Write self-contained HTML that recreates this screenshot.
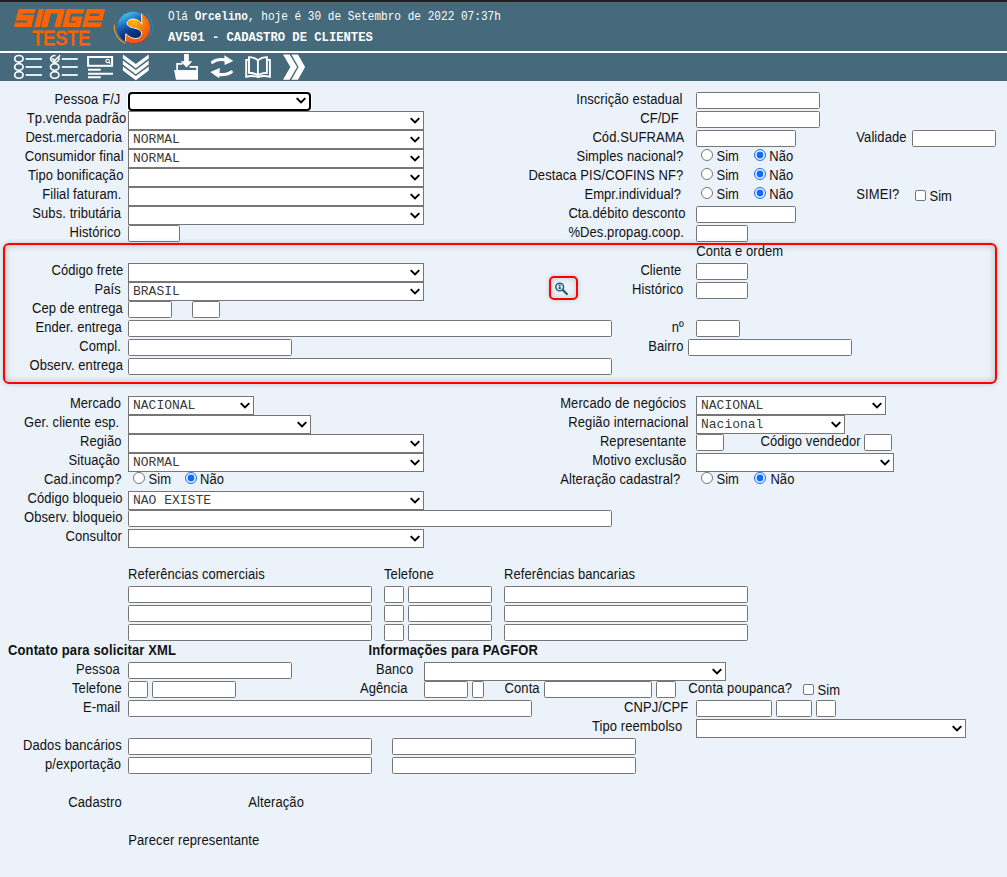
<!DOCTYPE html>
<html><head><meta charset="utf-8"><style>
html,body{margin:0;padding:0;}
body{width:1007px;height:877px;overflow:hidden;position:relative;background:#ebf2f9;font-family:"Liberation Sans",sans-serif;font-size:13px;color:#111;}
#topstrip{position:absolute;left:0;top:0;width:1007px;height:2px;background:#1f2023}
#hdr{position:absolute;left:0;top:4px;width:1007px;height:47px;background:#446a7b}
#hline{position:absolute;left:0;top:51px;width:1007px;height:2px;background:#fff}
#tb{position:absolute;left:0;top:53px;width:1007px;height:28px;background:#446a7b}
.ht{position:absolute;color:#fff;font-family:"Liberation Mono",monospace;white-space:nowrap;line-height:14px}
.l{position:absolute;white-space:nowrap;line-height:15px;letter-spacing:0.08px;transform:scaleY(1.06);transform-origin:0 12px}
.s{position:absolute;box-sizing:border-box;border:1px solid #767676;background:#fff;}
.sf{border:2px solid #000;border-radius:4px;box-shadow:0 0 0 1px #fff}
.st{position:absolute;left:4px;top:1px;font-family:"Liberation Mono",monospace;font-size:13px;line-height:15px;color:#3a3a3a;white-space:nowrap}
.chev{position:absolute;right:3.5px;top:5px}
.i{position:absolute;box-sizing:border-box;border:1px solid #767676;border-radius:1.6px;background:#fff;}
.r{position:absolute;width:12px;height:12px;box-sizing:border-box;border:1px solid #767676;border-radius:50%;background:#fff}
.rc{position:absolute;width:12px;height:12px;box-sizing:border-box;border:1.2px solid #1a6ff0;border-radius:50%;background:#fff;box-shadow:inset 0 0 0 1.6px #fff, inset 0 0 0 6px #0f6cff}
.c{position:absolute;width:11px;height:11px;box-sizing:border-box;border:1px solid #767676;border-radius:2px;background:#fff}
.box{position:absolute;border:2px solid #f00;border-radius:6px;box-shadow:0 0 5px rgba(0,0,0,.2), inset 0 0 7px rgba(0,0,0,.24)}
.mag{position:absolute;border:2px solid #f00;border-radius:5px;box-shadow:0 0 5px rgba(0,0,0,.18), inset 0 0 6px rgba(0,0,0,.18)}
</style></head><body>

<div id="topstrip"></div><div style="position:absolute;left:0;top:2px;width:1007px;height:1px;background:#60676b"></div><div style="position:absolute;left:0;top:3px;width:1007px;height:1px;background:#3f6b7e"></div>
<div id="hdr"></div>
<div id="hline"></div>
<div id="tb"></div>
<svg id="hsvg" width="1007" height="81" viewBox="0 0 1007 81" style="position:absolute;left:0;top:0"><g fill="#ff6300"><polygon points="18.50,9.00 35.70,9.00 34.58,13.50 22.88,13.50 22.50,15.00 34.20,15.00 31.20,27.00 14.00,27.00 15.12,22.50 27.12,22.50 27.62,20.50 15.62,20.50"/><polygon points="38.80,9.00 44.30,9.00 39.80,27.00 34.30,27.00"/><polygon points="45.50,9.00 65.00,9.00 60.50,27.00 54.40,27.00 57.80,13.40 50.80,13.40 47.40,27.00 41.00,27.00"/><polygon points="66.80,9.00 84.50,9.00 83.40,13.40 70.90,13.40 68.65,22.40 75.65,22.40 76.03,20.90 71.03,20.90 72.15,16.40 82.65,16.40 80.00,27.00 62.30,27.00"/><path fill-rule="evenodd" d="M86.80,9.00 L105.20,9.00 L102.35,20.40 L88.15,20.40 L87.65,22.40 L101.85,22.40 L100.70,27.00 L82.30,27.00 Z M89.90,13.40 L99.40,13.40 L98.78,15.90 L89.28,15.90 Z"/></g><text x="32.3" y="45.2" font-family="Liberation Sans" font-size="20.6" fill="#ff6300" stroke="#ff6300" stroke-width="0.9" textLength="57.8" lengthAdjust="spacingAndGlyphs">TESTE</text>
<defs>
<linearGradient id="gb" x1="0.25" y1="0.05" x2="0.65" y2="0.85"><stop offset="0" stop-color="#48c0f0"/><stop offset="0.35" stop-color="#1a6cc0"/><stop offset="0.62" stop-color="#0b3a88"/><stop offset="1" stop-color="#08235e"/></linearGradient>
<radialGradient id="go" cx="133.5" cy="22" r="18" gradientUnits="userSpaceOnUse"><stop offset="0" stop-color="#ffc400"/><stop offset="0.35" stop-color="#f7900a"/><stop offset="1" stop-color="#ee5a12"/></radialGradient>
<clipPath id="cc"><ellipse cx="133.7" cy="27.6" rx="16.5" ry="15.8"/></clipPath>
</defs>
<ellipse cx="133.7" cy="27.6" rx="16.5" ry="15.8" fill="url(#gb)"/>
<g clip-path="url(#cc)">
<path d="M141.3 8 L141.8 24.2 C139 18.2 129.5 17.2 127.2 22.2 C126.4 26.6 131.5 27.6 136 28.5 C141.5 29.8 143.2 33.5 140.2 36.8 C136.5 40.2 130 38.4 125.8 33.6 L125.3 48 L156 48 L156 8 Z" fill="url(#go)" stroke="#fff" stroke-width="0.9"/>
</g>
<path d="M146.5 13.8 A18.5 18.5 0 0 1 150 36.5" fill="none" stroke="#1f86c0" stroke-width="1.1"/>
<path d="M114.3 24.5 A19.5 19.5 0 0 0 125.5 43.6" fill="none" stroke="#f39a1a" stroke-width="1.1"/>

<g fill="none" stroke="#ffffff" stroke-width="1.65">
<ellipse cx="18.9" cy="58.8" rx="4.2" ry="3.3"/><ellipse cx="18.9" cy="66.9" rx="4.2" ry="3.3"/><ellipse cx="18.9" cy="74.9" rx="4.2" ry="3.3"/>
<ellipse cx="54.7" cy="66.9" rx="4.2" ry="3.3"/><ellipse cx="54.7" cy="74.9" rx="4.2" ry="3.3"/>
<path d="M58.5 57.3 A4.2 3.3 0 1 1 55.5 55.6"/>
<path d="M52.2 58.2 L54.4 60.6 L60.2 55.2" stroke-width="1.5"/>
</g>
<g stroke="#e2e9ec" stroke-width="2">
<path d="M25.6 59 H42 M25.6 67 H42 M25.6 75 H42 M61.8 59 H77.8 M61.8 67 H77.8 M61.8 75 H77.8"/>
</g>
<g fill="none" stroke="#ffffff" stroke-width="2">
<rect x="88.1" y="57" width="24" height="8.8"/>
<path d="M88 69.7 H100.7 M88 73.7 H113 M88 77.2 H100.7"/>
</g>
<circle cx="107.6" cy="60.9" r="1.7" fill="none" stroke="#ffffff" stroke-width="1.1"/><path d="M108.8 62.1 L110.3 63.6" stroke="#ffffff" stroke-width="1.2"/>
<g fill="#ffffff">
<polygon points="122.9,54.4 135.8,64 148.7,54.4 148.7,58.6 135.8,68.2 122.9,58.6"/>
<polygon points="122.9,60.4 135.8,70 148.7,60.4 148.7,64.6 135.8,74.2 122.9,64.6"/>
<polygon points="122.9,66.4 135.8,76 148.7,66.4 148.7,70.6 135.8,80.2 122.9,70.6"/>
</g>
<g fill="#ffffff">
<rect x="184.1" y="54" width="4.7" height="8"/>
<polygon points="180.5,61.2 192.4,61.2 186.5,67.6"/>
<polygon points="174.1,69.9 198,69.9 198,79.8 176,79.8"/>
</g>
<path d="M177.1 79 V63.9 H182.4 M189.6 66.9 H197.1 V70" fill="none" stroke="#ffffff" stroke-width="1.7"/>
<g fill="none" stroke="#ffffff" stroke-width="3.2" stroke-linecap="round">
<path d="M212.5 62.3 C216 59.5 221 59 226.5 60"/>
<path d="M231.3 72 C228 74.6 222 75 217 74.5"/>
</g>
<g fill="#ffffff">
<polygon points="224.3,55.3 233.4,61.1 224.6,64.9"/>
<polygon points="219.8,68 210.3,72 219.2,78.2"/>
</g>
<g fill="none" stroke="#ffffff" stroke-width="1.9" stroke-linejoin="miter">
<path d="M257.9 60.2 Q253.5 56.8 249 57.1 V72.8 Q253.5 72.8 257.9 75.2 Q262.3 72.8 266.9 72.8 V57.1 Q262.3 56.8 257.9 60.2 V75.6"/>
<path d="M249 59.9 H246.2 V76.8 Q252 75 257.9 77 Q263.8 75 269.9 76.8 V59.9 H266.9"/>
</g>
<g fill="#ffffff">
<polygon points="283,54.4 289.6,54.4 297.1,67.1 289.6,79.8 283,79.8 290.4,67.1"/>
<polygon points="291.4,54.4 298,54.4 305.1,67.1 298,79.8 291.4,79.8 298.6,67.1"/>
</g>
</svg>
<div class="ht" style="left:168px;top:10.4px;font-size:11.1px;transform:scaleY(1.13);transform-origin:0 11.5px">Olá <b>Orcelino</b>, hoje é 30 de Setembro de 2022 07:37h</div>
<div class="ht" style="left:168px;top:30.8px;font-size:12.2px;font-weight:bold">AV501 - CADASTRO DE CLIENTES</div>

<div class="l" style="left:54.6px;top:92px;">Pessoa F/J</div>
<div class="l" style="left:26.8px;top:111px;">Tp.venda padrão</div>
<div class="l" style="left:25.4px;top:130px;">Dest.mercadoria</div>
<div class="l" style="left:24.8px;top:149px;">Consumidor final</div>
<div class="l" style="left:28px;top:168px;">Tipo bonificação</div>
<div class="l" style="left:42.2px;top:187px;">Filial faturam.</div>
<div class="l" style="left:32.3px;top:206px;">Subs. tributária</div>
<div class="l" style="left:69.5px;top:225px;">Histórico</div>
<div class="s sf" style="left:128px;top:92px;width:183px;height:19px"><svg class="chev" style="right:3.3px;top:3.4px" width="10" height="7" viewBox="0 0 10 7"><path d="M0.7 1.1 L5 5.4 L9.3 1.1" fill="none" stroke="#000" stroke-width="2"/></svg></div>
<div class="s" style="left:128px;top:111px;width:296px;height:19px"><svg class="chev" width="10" height="7" viewBox="0 0 10 7"><path d="M0.7 1.1 L5 5.4 L9.3 1.1" fill="none" stroke="#000" stroke-width="2"/></svg></div>
<div class="s" style="left:128px;top:130px;width:296px;height:19px"><span class="st">NORMAL</span><svg class="chev" width="10" height="7" viewBox="0 0 10 7"><path d="M0.7 1.1 L5 5.4 L9.3 1.1" fill="none" stroke="#000" stroke-width="2"/></svg></div>
<div class="s" style="left:128px;top:149px;width:296px;height:19px"><span class="st">NORMAL</span><svg class="chev" width="10" height="7" viewBox="0 0 10 7"><path d="M0.7 1.1 L5 5.4 L9.3 1.1" fill="none" stroke="#000" stroke-width="2"/></svg></div>
<div class="s" style="left:128px;top:168px;width:296px;height:19px"><svg class="chev" width="10" height="7" viewBox="0 0 10 7"><path d="M0.7 1.1 L5 5.4 L9.3 1.1" fill="none" stroke="#000" stroke-width="2"/></svg></div>
<div class="s" style="left:128px;top:187px;width:296px;height:19px"><svg class="chev" width="10" height="7" viewBox="0 0 10 7"><path d="M0.7 1.1 L5 5.4 L9.3 1.1" fill="none" stroke="#000" stroke-width="2"/></svg></div>
<div class="s" style="left:128px;top:206px;width:296px;height:19px"><svg class="chev" width="10" height="7" viewBox="0 0 10 7"><path d="M0.7 1.1 L5 5.4 L9.3 1.1" fill="none" stroke="#000" stroke-width="2"/></svg></div>
<div class="i" style="left:128px;top:225px;width:52px;height:17px"></div>
<div class="l" style="left:576.2px;top:92px;">Inscrição estadual</div>
<div class="l" style="left:640.2px;top:111px;">CF/DF</div>
<div class="l" style="left:592.4px;top:130px;">Cód.SUFRAMA</div>
<div class="l" style="left:576.4px;top:149px;">Simples nacional?</div>
<div class="l" style="left:528.4px;top:168px;">Destaca PIS/COFINS NF?</div>
<div class="l" style="left:584.4px;top:187px;">Empr.individual?</div>
<div class="l" style="left:568.4px;top:206px;">Cta.débito desconto</div>
<div class="l" style="left:568.4px;top:225px;">%Des.propag.coop.</div>
<div class="i" style="left:696px;top:92px;width:124px;height:17px"></div>
<div class="i" style="left:696px;top:111px;width:124px;height:17px"></div>
<div class="i" style="left:696px;top:130px;width:100px;height:17px"></div>
<div class="i" style="left:696px;top:206px;width:100px;height:17px"></div>
<div class="i" style="left:696px;top:225px;width:52px;height:17px"></div>
<div class="r" style="left:701px;top:149px"></div>
<div class="l" style="left:716.4px;top:149px;">Sim</div>
<div class="rc" style="left:754.3px;top:149px"></div>
<div class="l" style="left:769.3px;top:149px;">Não</div>
<div class="r" style="left:701px;top:168px"></div>
<div class="l" style="left:716.4px;top:168px;">Sim</div>
<div class="rc" style="left:754.3px;top:168px"></div>
<div class="l" style="left:769.3px;top:168px;">Não</div>
<div class="r" style="left:701px;top:187px"></div>
<div class="l" style="left:716.4px;top:187px;">Sim</div>
<div class="rc" style="left:754.3px;top:187px"></div>
<div class="l" style="left:769.3px;top:187px;">Não</div>
<div class="l" style="left:856.3px;top:130px;">Validade</div>
<div class="i" style="left:912px;top:130px;width:84px;height:17px"></div>
<div class="l" style="left:856.3px;top:187px;">SIMEI?</div>
<div class="c" style="left:914.8px;top:190.2px"></div>
<div class="l" style="left:929.4px;top:189px;">Sim</div>
<div class="box" style="left:2.5px;top:242.5px;width:990px;height:137px"></div>
<div class="l" style="left:696.2px;top:244px;">Conta e ordem</div>
<div class="l" style="left:51.5px;top:263px;">Código frete</div>
<div class="l" style="left:94.4px;top:282px;">País</div>
<div class="l" style="left:32.1px;top:301px;">Cep de entrega</div>
<div class="l" style="left:35.4px;top:320px;">Ender. entrega</div>
<div class="l" style="left:79.3px;top:339px;">Compl.</div>
<div class="l" style="left:29.5px;top:358px;">Observ. entrega</div>
<div class="s" style="left:128px;top:263px;width:296px;height:19px"><svg class="chev" width="10" height="7" viewBox="0 0 10 7"><path d="M0.7 1.1 L5 5.4 L9.3 1.1" fill="none" stroke="#000" stroke-width="2"/></svg></div>
<div class="s" style="left:128px;top:282px;width:296px;height:19px"><span class="st">BRASIL</span><svg class="chev" width="10" height="7" viewBox="0 0 10 7"><path d="M0.7 1.1 L5 5.4 L9.3 1.1" fill="none" stroke="#000" stroke-width="2"/></svg></div>
<div class="i" style="left:128px;top:301px;width:44px;height:17px"></div>
<div class="i" style="left:192px;top:301px;width:28px;height:17px"></div>
<div class="i" style="left:128px;top:320px;width:484px;height:17px"></div>
<div class="i" style="left:128px;top:339px;width:164px;height:17px"></div>
<div class="i" style="left:128px;top:358px;width:484px;height:17px"></div>
<div class="l" style="left:640.4px;top:263px;">Cliente</div>
<div class="i" style="left:696px;top:263px;width:52px;height:17px"></div>
<div class="l" style="left:632px;top:282px;">Histórico</div>
<div class="i" style="left:696px;top:282px;width:52px;height:17px"></div>
<div class="l" style="left:671.7px;top:320px;">nº</div>
<div class="i" style="left:696px;top:320px;width:44px;height:17px"></div>
<div class="l" style="left:648.3px;top:339px;">Bairro</div>
<div class="i" style="left:688px;top:339px;width:164px;height:17px"></div>
<div class="mag" style="left:549.3px;top:276px;width:25px;height:20px"><svg width="29" height="24" viewBox="0 0 29 24" style="position:absolute;left:-2px;top:-2px"><circle cx="10.7" cy="11" r="3.85" fill="none" stroke="#1d6275" stroke-width="1.5"/><path d="M13.7 13.9 L17.9 18" stroke="#1d6275" stroke-width="2.2" stroke-linecap="round"/><circle cx="10.7" cy="9.6" r="1.15" fill="#1d6275"/><path d="M9.3 12.9 Q9.3 10.7 10.7 10.7 Q12.1 10.7 12.1 12.9 Z" fill="#1d6275"/></svg></div>
<div class="l" style="left:69.9px;top:396px;">Mercado</div>
<div class="l" style="left:24px;top:415px;">Ger. cliente esp.</div>
<div class="l" style="left:80px;top:434px;">Região</div>
<div class="l" style="left:68.6px;top:453px;">Situação</div>
<div class="l" style="left:44.1px;top:472px;">Cad.incomp?</div>
<div class="l" style="left:27.5px;top:491px;">Código bloqueio</div>
<div class="l" style="left:24px;top:510px;">Observ. bloqueio</div>
<div class="l" style="left:65.5px;top:529px;">Consultor</div>
<div class="s" style="left:128px;top:396px;width:126px;height:19px"><span class="st">NACIONAL</span><svg class="chev" width="10" height="7" viewBox="0 0 10 7"><path d="M0.7 1.1 L5 5.4 L9.3 1.1" fill="none" stroke="#000" stroke-width="2"/></svg></div>
<div class="s" style="left:128px;top:415px;width:183px;height:19px"><svg class="chev" width="10" height="7" viewBox="0 0 10 7"><path d="M0.7 1.1 L5 5.4 L9.3 1.1" fill="none" stroke="#000" stroke-width="2"/></svg></div>
<div class="s" style="left:128px;top:434px;width:296px;height:19px"><svg class="chev" width="10" height="7" viewBox="0 0 10 7"><path d="M0.7 1.1 L5 5.4 L9.3 1.1" fill="none" stroke="#000" stroke-width="2"/></svg></div>
<div class="s" style="left:128px;top:453px;width:296px;height:19px"><span class="st">NORMAL</span><svg class="chev" width="10" height="7" viewBox="0 0 10 7"><path d="M0.7 1.1 L5 5.4 L9.3 1.1" fill="none" stroke="#000" stroke-width="2"/></svg></div>
<div class="r" style="left:132.6px;top:472px"></div>
<div class="l" style="left:148.5px;top:472px;">Sim</div>
<div class="rc" style="left:184.9px;top:472px"></div>
<div class="l" style="left:200px;top:472px;">Não</div>
<div class="s" style="left:128px;top:491px;width:296px;height:19px"><span class="st">NAO EXISTE</span><svg class="chev" width="10" height="7" viewBox="0 0 10 7"><path d="M0.7 1.1 L5 5.4 L9.3 1.1" fill="none" stroke="#000" stroke-width="2"/></svg></div>
<div class="i" style="left:128px;top:510px;width:484px;height:17px"></div>
<div class="s" style="left:128px;top:529px;width:296px;height:19px"><svg class="chev" width="10" height="7" viewBox="0 0 10 7"><path d="M0.7 1.1 L5 5.4 L9.3 1.1" fill="none" stroke="#000" stroke-width="2"/></svg></div>
<div class="l" style="left:560.2px;top:396px;">Mercado de negócios</div>
<div class="l" style="left:568.3px;top:415px;">Região internacional</div>
<div class="l" style="left:599.9px;top:434px;">Representante</div>
<div class="l" style="left:592.2px;top:453px;">Motivo exclusão</div>
<div class="l" style="left:560.2px;top:472px;">Alteração cadastral?</div>
<div class="s" style="left:696px;top:396px;width:190px;height:19px"><span class="st">NACIONAL</span><svg class="chev" width="10" height="7" viewBox="0 0 10 7"><path d="M0.7 1.1 L5 5.4 L9.3 1.1" fill="none" stroke="#000" stroke-width="2"/></svg></div>
<div class="s" style="left:696px;top:415px;width:149px;height:19px"><span class="st">Nacional</span><svg class="chev" width="10" height="7" viewBox="0 0 10 7"><path d="M0.7 1.1 L5 5.4 L9.3 1.1" fill="none" stroke="#000" stroke-width="2"/></svg></div>
<div class="i" style="left:696px;top:434px;width:28px;height:17px"></div>
<div class="l" style="left:760.5px;top:434px;">Código vendedor</div>
<div class="i" style="left:864px;top:434px;width:28px;height:17px"></div>
<div class="s" style="left:696px;top:453px;width:198px;height:19px"><svg class="chev" width="10" height="7" viewBox="0 0 10 7"><path d="M0.7 1.1 L5 5.4 L9.3 1.1" fill="none" stroke="#000" stroke-width="2"/></svg></div>
<div class="r" style="left:701px;top:472px"></div>
<div class="l" style="left:716.4px;top:472px;">Sim</div>
<div class="rc" style="left:754.3px;top:472px"></div>
<div class="l" style="left:770.4px;top:472px;">Não</div>
<div class="l" style="left:128px;top:567px;">Referências comerciais</div>
<div class="l" style="left:384px;top:567px;">Telefone</div>
<div class="l" style="left:504px;top:567px;">Referências bancarias</div>
<div class="i" style="left:128px;top:586px;width:244px;height:17px"></div>
<div class="i" style="left:384px;top:586px;width:20px;height:17px"></div>
<div class="i" style="left:408px;top:586px;width:84px;height:17px"></div>
<div class="i" style="left:504px;top:586px;width:244px;height:17px"></div>
<div class="i" style="left:128px;top:605px;width:244px;height:17px"></div>
<div class="i" style="left:384px;top:605px;width:20px;height:17px"></div>
<div class="i" style="left:408px;top:605px;width:84px;height:17px"></div>
<div class="i" style="left:504px;top:605px;width:244px;height:17px"></div>
<div class="i" style="left:128px;top:624px;width:244px;height:17px"></div>
<div class="i" style="left:384px;top:624px;width:20px;height:17px"></div>
<div class="i" style="left:408px;top:624px;width:84px;height:17px"></div>
<div class="i" style="left:504px;top:624px;width:244px;height:17px"></div>
<div class="l" style="left:8px;top:643px;font-weight:bold;letter-spacing:0.13px;">Contato para solicitar XML</div>
<div class="l" style="left:368.5px;top:643px;font-weight:bold;letter-spacing:0.13px;">Informações para PAGFOR</div>
<div class="l" style="left:76px;top:662px;">Pessoa</div>
<div class="i" style="left:128px;top:662px;width:164px;height:17px"></div>
<div class="l" style="left:72px;top:681px;">Telefone</div>
<div class="i" style="left:128px;top:681px;width:20px;height:17px"></div>
<div class="i" style="left:152px;top:681px;width:84px;height:17px"></div>
<div class="l" style="left:83px;top:700px;">E-mail</div>
<div class="i" style="left:128px;top:700px;width:404px;height:17px"></div>
<div class="l" style="left:376px;top:662px;">Banco</div>
<div class="s" style="left:424px;top:662px;width:302px;height:19px"><svg class="chev" width="10" height="7" viewBox="0 0 10 7"><path d="M0.7 1.1 L5 5.4 L9.3 1.1" fill="none" stroke="#000" stroke-width="2"/></svg></div>
<div class="l" style="left:360px;top:681px;">Agência</div>
<div class="i" style="left:424px;top:681px;width:44px;height:17px"></div>
<div class="i" style="left:472px;top:681px;width:12px;height:17px"></div>
<div class="l" style="left:504.6px;top:681px;">Conta</div>
<div class="i" style="left:544px;top:681px;width:108px;height:17px"></div>
<div class="i" style="left:656px;top:681px;width:20px;height:17px"></div>
<div class="l" style="left:688.3px;top:681px;">Conta poupanca?</div>
<div class="c" style="left:803.3px;top:684.2px"></div>
<div class="l" style="left:817.5px;top:683px;">Sim</div>
<div class="l" style="left:624px;top:700px;">CNPJ/CPF</div>
<div class="i" style="left:696px;top:700px;width:76px;height:17px"></div>
<div class="i" style="left:776px;top:700px;width:36px;height:17px"></div>
<div class="i" style="left:816px;top:700px;width:20px;height:17px"></div>
<div class="l" style="left:592px;top:719px;">Tipo reembolso</div>
<div class="s" style="left:696px;top:719px;width:270px;height:19px"><svg class="chev" width="10" height="7" viewBox="0 0 10 7"><path d="M0.7 1.1 L5 5.4 L9.3 1.1" fill="none" stroke="#000" stroke-width="2"/></svg></div>
<div class="l" style="left:23px;top:738px;">Dados bancários</div>
<div class="i" style="left:128px;top:738px;width:244px;height:17px"></div>
<div class="i" style="left:392px;top:738px;width:244px;height:17px"></div>
<div class="l" style="left:45px;top:757px;">p/exportação</div>
<div class="i" style="left:128px;top:757px;width:244px;height:17px"></div>
<div class="i" style="left:392px;top:757px;width:244px;height:17px"></div>
<div class="l" style="left:68.3px;top:795px;">Cadastro</div>
<div class="l" style="left:248.3px;top:795px;">Alteração</div>
<div class="l" style="left:128.3px;top:833px;">Parecer representante</div>
</body></html>
